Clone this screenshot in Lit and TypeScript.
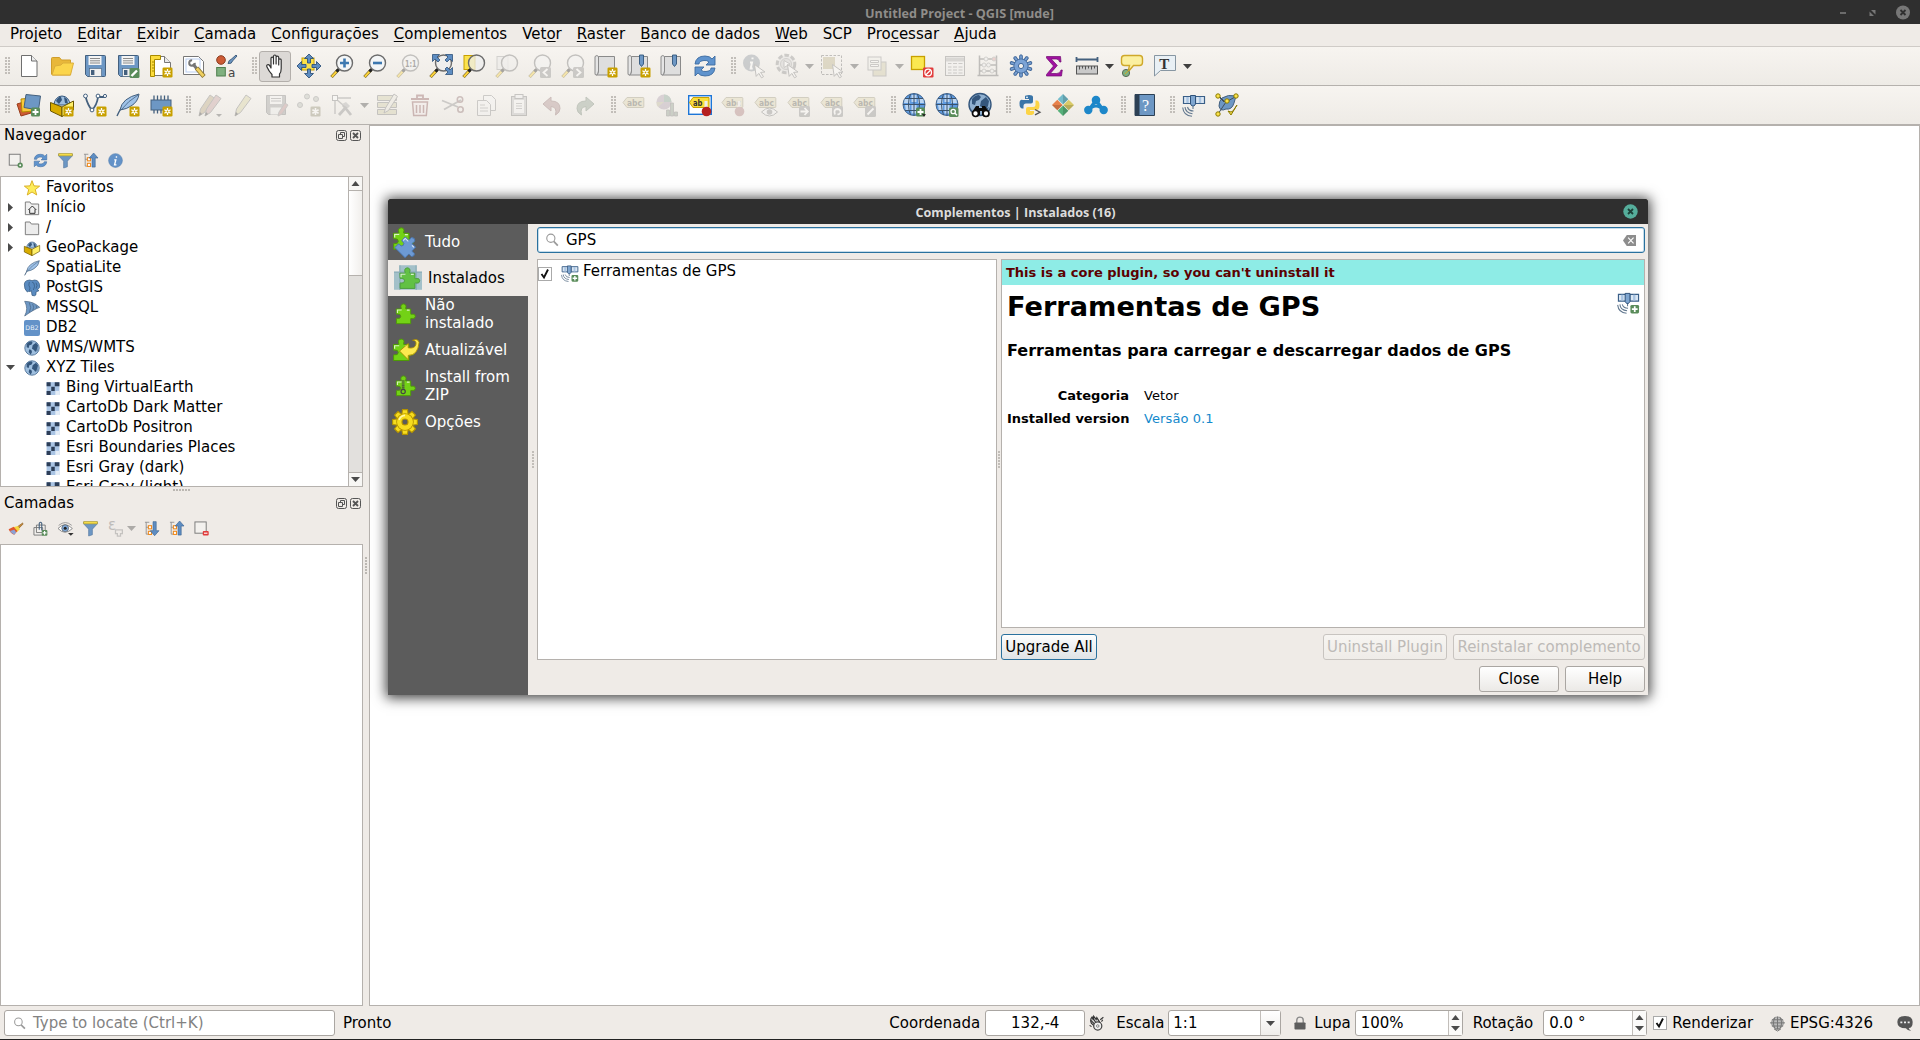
import { LitElement, html, svg, css, nothing } from "lit";
import { customElement, property } from "lit/decorators.js";
import { classMap } from "lit/directives/class-map.js";

/* ---------- shared icon parts (24 x 24 grid) ---------- */
const starBadge = svg`<rect x="13.5" y="13.5" width="10" height="10" rx="1.3" fill="#c8a000"/><path d="M18.5 15v7M15.4 16.8l6.2 3.5M15.4 20.3l6.2-3.5" stroke="#fff" stroke-width="1.3"/><circle cx="18.5" cy="18.5" r="1.9" fill="#fff"/><circle cx="18.5" cy="18.5" r=".9" fill="#c8a000"/>`;
const plusBadge = svg`<rect x="14" y="14.5" width="9" height="9" rx="1.5" fill="#5a8c5a"/><path d="M18.5 16v6M15.5 19h6" stroke="#fff" stroke-width="1.8"/>`;
const lens = (fill = "#f4f6f7") => svg`<path d="M1.5 23 8 16" stroke="#6a5a20" stroke-width="3.2"/><path d="M1.8 22.7 6.5 17.6" stroke="#fcd33a" stroke-width="2"/><path d="M6.5 17.5 9 15" stroke="#222" stroke-width="3"/><circle cx="14.5" cy="9" r="8" fill="${fill}" stroke="#6c6c6c" stroke-width="1.4"/>`;
const lensHigh = svg`<path d="M1.5 23 8 16" stroke="#6a5a20" stroke-width="3.2"/><path d="M1.8 22.7 6.5 17.6" stroke="#fcd33a" stroke-width="2"/><path d="M6.5 17.5 9 15" stroke="#222" stroke-width="3"/><circle cx="14.5" cy="9" r="8" fill="#eee" fill-opacity=".75" stroke="#6c6c6c" stroke-width="1.4"/>`;
const cursor = svg`<path d="M12.5 10.5 23 18l-4.4.4 2.9 4.3-2 1.1-2.7-4.4-2.6 3z" fill="#fff" stroke="#777" stroke-width="1"/>`;
const page = svg`<path d="M2.5 2.5h13l6 6v13h-19z" fill="#fff" stroke="#777"/><path d="M15.5 2.5v6h6" fill="#e8e8e8" stroke="#777"/>`;
const floppy = svg`<path d="M2.5 1.5h19q1 0 1 1v19q0 1-1 1h-17l-2-2z" fill="#6d97c4" stroke="#44607e"/><rect x="5.5" y="2" width="13" height="9" fill="#f4f4f4"/><path d="M7 4.5h10M7 6.8h10M7 9h10" stroke="#8a8a8a"/><rect x="6.5" y="14.5" width="12" height="8" fill="#f0f0f0" stroke="#44607e" stroke-width=".6"/><rect x="8" y="16" width="3.4" height="5" fill="#44607e"/>`;
const scroll = svg`<path d="M1 2.5q2-2 3.500 0V17q0 4-2 4T1 19z" fill="#e5e5e5" stroke="#8a8a8a"/><path d="M4.500 2.500h16V21H2.500q2-.5 2-4z" fill="#dedede" stroke="#8a8a8a"/>`;
const bookmark = svg`<path d="M12.500 1h4v9l-2 2.500-2-2.500z" fill="#6d97c4" stroke="#30557a" stroke-width=".9"/>`;
const label = svg`<path d="M1 9.500 5 4.500h16q.8 0 .8.800v8.400q0 .800-.8.800H5z" fill="#dcd3ac" stroke="#999274"/><text x="5" y="12.600" font-size="8.500" font-weight="700" font-family="DejaVu Sans" fill="#55554a" textLength="15" lengthAdjust="spacingAndGlyphs">abc</text>`;
const greyBadge = (d: string) => svg`<rect x="12" y="13" width="11" height="11" rx="1.500" fill="#8a8a8a"/><path d="${d}" fill="none" stroke="#fff" stroke-width="1.800"/>`;
const land = svg`<path d="M4 6q3-4 7-4l2 2-2 3-3 1-1 4-3-1zM13 8l5-4 3 4-1 5-3 5-2-3-3-2zM8 14l3 1 1 3-2 4-3-4zM19 15l2-1-2 4z" fill="#34567c"/>`;
const earth = svg`<circle cx="12" cy="12" r="10.800" fill="#9fbfdf" stroke="#54769b" stroke-width="1.400"/>${land}`;
const gridGlobe = svg`<circle cx="12" cy="11.500" r="11" fill="#5f9be0" stroke="#45678f"/><path d="M3 5h5v5H2zM9.500 2h5v7h-5zM16 5h5l1 5h-6zM3 12h5v6H4zM9.500 11.500h5v9h-5z" fill="#d9e8f8" opacity=".75"/><path d="M1 11.500h22M3 5.500h18M3 17.500h18M12 .5v22M8.500 1Q4.500 11 8.500 22M15.500 1q4 10 0 21" fill="none" stroke="#3a536e" stroke-width="1"/>`;
const puzzle = (fill: string, edge: string) => svg`<path d="M2.500 6.500h5q.8 0 .3-1.200Q6.600 1.500 10.300 1q3.800.5 2.500 4.300-.5 1.200.4 1.200h5v5.200q0 1 1.200.5 3.600-.9 3.900 2.300-.3 3.200-3.900 2.400-1.200-.6-1.200.400v5.200h-15.500v-5.200q0-1 1.200-.5 3.200.6 3.500-2.300-.3-2.900-3.500-2.400-1.200.5-1.200-.5z" fill="${fill}" stroke="${edge}"/><path d="M3.700 10.800V7.700h4.600M14 7.800h3" stroke="#fff" stroke-opacity=".75" stroke-width="1.200" fill="none"/>`;
const cog = (fill: string, edge: string, hole: string) => svg`<g fill="${fill}" stroke="${edge}" stroke-width="1">${[0, 45, 90, 135, 180, 225, 270, 315].map((a) => svg`<path transform="rotate(${a} 12 12)" d="M9 5.800 9.700.600h4.600l.7 5.200z"/>`)}<circle cx="12" cy="12" r="7.600"/></g><circle cx="12" cy="12" r="7.200" fill="${fill}"/><path d="M6.500 10Q8 6 12 5.800" fill="none" stroke="#fff7a8" stroke-width="1.600"/><circle cx="12" cy="12" r="2.800" fill="${hole}" stroke="${edge}"/>`;
const feather = svg`<path d="M1 23Q5 14 9 11" fill="none" stroke="#44607e" stroke-width="1.400"/><path d="M4 17Q6 5 23 1q-1 8-8 12-4 3-11 4z" fill="#9fc2e8" stroke="#44607e"/><path d="M5 17Q12 8 22 2" fill="none" stroke="#44607e" stroke-width=".8"/>`;
const box = svg`<path d="M4 12a8 9 0 0 1 16 0z" fill="#9fbfdf" stroke="#34567c"/><path d="M6 8q3-5 5-4l1 3-3 4zM14 4l3 2 1 5-3-1z" fill="#34567c"/><path d="M.500 9.500 12 14v9.500L.500 18z" fill="#d8ac00" stroke="#6b5600"/><path d="M23.500 8 12 14v9.500L23.500 17z" fill="#fff06a" stroke="#6b5600"/>`;
const satellite = svg`<g fill="#dbe7f3" stroke="#3a5f88" stroke-width="1.200"><path d="M1.500 3.500h8v7h-8zM13.500 3.500h9v7h-9z"/></g><path d="M5.500 4v6M18 4v6" stroke="#a9c4e2" stroke-width="2.400"/><path d="M8.500 2.500h5v8.500l-1.500 2h-2L8.500 11z" fill="#7fa6d0" stroke="#2f527a"/><path d="M11 13.500v2.500M11.500 18q-5 0-6-4M10.500 20.700Q3.500 20 3 14M10 23.300Q1.500 22.700.7 14.500" fill="none" stroke="#62788f" stroke-width="1.100"/>`;
const pencil = (fill: string) => svg`<path d="M4 23l1.500-7L15 2l5 3.500L9.500 19.500z" fill="${fill}" stroke="#777"/><path d="m4 23 1-4 2 2z" fill="#333"/>`;
const sync = svg`<path d="M2 10Q3 2 12 2q5 0 7 3l3-3v9h-9l3-3q-2-2-5-1.500Q6 7 6 10zM22 14q-1 8-10 8-5 0-7-3l-3 3v-9h9l-3 3q2 2 5 1.500 5-.5 5-3.500z" fill="#5f93cd" stroke="#3c6ba0" stroke-width=".9"/>`;
const treeLines = svg`<path d="M1.500 2h7M3.500 2v19h4M3.500 10h4" fill="none" stroke="#888" stroke-width="1.300"/><rect x="7" y="7.500" width="5" height="5" fill="#fff" stroke="#ef8a1d" stroke-width="1.700"/><rect x="7" y="16.500" width="5" height="5" fill="#fff" stroke="#ef8a1d" stroke-width="1.700"/>`;

const ICONS: Record<string, unknown> = {
  new: svg`<path d="M4.500 1.500h10l5.500 5.500v15.500H4.500z" fill="#fff" stroke="#6f6f6f"/><path d="M14.500 1.500V7H20" fill="#eee" stroke="#6f6f6f"/>`,
  open: svg`<path d="M1.500 20V4.500q0-1 1-1h7l2 2.500h9v15H2.500z" fill="#e8b73a" stroke="#cf9d2b"/><path d="m2 21 3-9 6-1 2-2h10.500l-3 12z" fill="#fbd54c" stroke="#dcae3a"/>`,
  save: floppy,
  saveas: svg`${floppy}<rect x="13.500" y="14" width="10" height="10" rx="1.500" fill="#5a8c5a"/><path d="m15.500 22 5.500-5.500" stroke="#fff" stroke-width="2.400"/>`,
  layout: svg`${page}<path d="M1.500 1.500h10v4h-6v17h-4z" fill="#fcdc3c" stroke="#a88a00"/><path d="M3 8h2M3 11h2M3 14h2M3 17h2" stroke="#a88a00"/>${starBadge}`,
  manager: svg`<path d="M1.500 2.500h15l5 5v13h-20z" fill="#fff" stroke="#777"/><rect x="4" y="5" width="14" height="13" fill="none" stroke="#b9cdf0"/><path d="m11 10 4 5" stroke="#777" stroke-width="3"/><path d="m14.500 14 7.500 8.500" stroke="#8a7430" stroke-width="4.400"/><path d="m14.800 14.300 6.700 7.700" stroke="#f0d060" stroke-width="2.800"/><circle cx="10" cy="9" r="2.800" fill="none" stroke="#777" stroke-width="2" stroke-dasharray="13 4"/>`,
  style: svg`<circle cx="6" cy="6" r="4.300" fill="#cd5b35" stroke="#8a3d20"/><rect x="1.700" y="13.500" width="8.600" height="8.500" fill="#7fb07f" stroke="#4f7f4f"/><path d="M13 9.500q1-4 3-4L21 1l1 1-4.500 5q-.5 3-4.500 2.500z" fill="#6d97c4" stroke="#44607e"/><text x="13" y="22.500" font-size="12" font-family="DejaVu Sans" fill="#444">a</text>`,
  hand: svg`<path d="M8 14V4.500q0-1.400 1.200-1.400T10.500 4.500V10 2.300Q10.600 1 11.800 1q1.300 0 1.300 1.300V10 3.300q.1-1.200 1.300-1.200t1.300 1.200V11 6q.1-1.200 1.200-1.200Q18.200 4.800 18.200 6v8.500q0 4-1.700 5.500v3H9v-2.500q-3-3-5-7.500-.8-1.600.5-2.200t2 .6z" fill="#fff" stroke="#333" stroke-width="1.200" stroke-linejoin="round"/>`,
  pan: svg`<rect x="5" y="4" width="12" height="12" fill="#fbe24c" stroke="#c8a000"/><g fill="#5e8dc2" stroke="#2f527a" stroke-width=".9"><path d="m12 0 4.500 4.500h-3V9h-3V4.500h-3zM12 24l4.500-4.500h-3V15h-3v4.500h-3zM0 12l4.500-4.500v3H9v3H4.500v3zM24 12l-4.500-4.500v3H15v3h4.500v3z"/></g>`,
  zin: svg`${lens()}<path d="M14.500 4.500v9M10 9h9" stroke="#3d78b0" stroke-width="2.600"/>`,
  zout: svg`${lens()}<path d="M10 9h9" stroke="#3d78b0" stroke-width="2.600"/>`,
  zone: svg`${lens()}<text x="9" y="12.500" font-size="9" font-weight="700" font-family="DejaVu Sans" fill="#333" textLength="11.500" lengthAdjust="spacingAndGlyphs">1:1</text>`,
  zfull: svg`${lensHigh}<g fill="#5e8dc2" stroke="#2f527a" stroke-width=".8"><path d="M3.500.500h7L8 3l3 3-2 2-3-3-2.500 2.500zM23.500.500h-7L19 3l-3 3 2 2 3-3 2.500 2.500zM23.500 20.500h-7L19 18l-3-3 2-2 3 3 2.500-2.500z"/></g>`,
  zsel: svg`<rect x="2" y="1.500" width="11" height="14" fill="#fbe24c" stroke="#c8a000"/>${lensHigh}`,
  zlayer: svg`<rect x="2" y="2.500" width="11" height="13" fill="#e8e8e8" stroke="#999"/>${lensHigh}`,
  zlast: svg`${lens()}${greyBadge("m19.500 15-4 3.500 4 3.500")}`,
  znext: svg`${lens()}${greyBadge("m15.500 15 4 3.500-4 3.500")}`,
  bmview: svg`${scroll}${starBadge}`,
  bmnew: svg`${scroll}${bookmark}${starBadge}`,
  bmshow: svg`${scroll}${bookmark}`,
  refresh: sync,
  identify: svg`<circle cx="9.500" cy="9" r="8.500" fill="#858e98"/><path d="M10.500 3.500v1.800M8 8.500h2l-1.300 6h2" stroke="#fff" stroke-width="2" fill="none"/>${cursor}`,
  action: svg`<circle cx="11" cy="10" r="8.800" fill="#ddd" stroke="#888" stroke-width="3" stroke-dasharray="4.600 2"/><circle cx="11" cy="10" r="5.500" fill="#ccc" stroke="#999"/><path d="M9 6.500v7l6-3.500z" fill="#fff" stroke="#888"/>${cursor}`,
  select: svg`<rect x="1.500" y="1.500" width="20" height="19" fill="none" stroke="#666" stroke-dasharray="2.500 1.500"/><rect x="3" y="3" width="12" height="12" fill="#b8ad82"/>${cursor}`,
  form: svg`<rect x="8" y="8" width="13" height="14" fill="#cfc9a4" stroke="#888"/><rect x="3" y="3" width="13" height="13" fill="#f0f0ea" stroke="#888"/><path d="M5.500 6.500h8v2h-8zM5.500 10.500h8v2h-8z" fill="#fff" stroke="#888"/>`,
  deselect: svg`<rect x="1.500" y="2.500" width="13" height="13" fill="#fbe850" stroke="#c8a000" stroke-width="1.300"/><rect x="13" y="13.500" width="10.500" height="10" rx="1.300" fill="#e13b3b"/><circle cx="18.200" cy="18.500" r="3.300" fill="none" stroke="#fff" stroke-width="1.300"/><path d="m16 20.700 4.500-4.400" stroke="#fff" stroke-width="1.300"/>`,
  table: svg`<rect x="2.500" y="2.500" width="19" height="19" fill="#f2f2f2" stroke="#777"/><path d="M3 5.500h18" stroke="#aaa" stroke-width="4"/><path d="M5 9.500h3.500M10 9.500h4M15.500 9.500h4M5 13h3.500M10 13h4M15.500 13h4M5 16h3.500M10 16h4M15.500 16h4M5 19h3.500M10 19h4M15.500 19h4" stroke="#888"/>`,
  abacus: svg`<path d="M3.500 1.500v20M20.500 1.500v20M3 5h18M3 11h18M3 17h18M1.500 21.500h21" stroke="#666" stroke-width="1.500"/><g fill="#eee" stroke="#999"><circle cx="10" cy="5" r="2"/><circle cx="18" cy="5" r="2" fill="#d99"/><circle cx="8" cy="11" r="2"/><circle cx="12.500" cy="11" r="2"/><circle cx="8" cy="17" r="2"/><circle cx="16" cy="17" r="2"/></g>`,
  toolbox: svg`<g stroke="#41689a" stroke-width="1" fill="#7ba3d6">${[0, 36, 72, 108, 144, 180, 216, 252, 288, 324].map((a) => svg`<path transform="rotate(${a} 12 12)" d="M10.700 6V1.500q1.300-1.500 2.600 0V6z"/>`)}<circle cx="12" cy="12" r="7"/></g><circle cx="12" cy="12" r="6.500" fill="#7ba3d6"/><circle cx="12" cy="12" r="2.600" fill="#f4f1ec" stroke="#41689a"/>`,
  sigma: svg`<path d="M4.500 2.500h14l.5 5.500h-1.300q-.7-3-3.500-3H9.300l6 6.500-7 8h6.500q3.500 0 4.200-3.500h1.300L19.500 22h-15v-1.500l7-8.500-7-8z" fill="#a012a0" stroke="#700a70" stroke-width=".7"/>`,
  ruler: svg`<path d="M1.500 3v5M22.500 3v5M1.500 5.500h21" stroke="#44607e" stroke-width="1.800"/><rect x="1.500" y="12" width="21" height="8" fill="#c9c9c9" stroke="#555"/><path d="M4.500 12v3.500M7.500 12v2.500M10.500 12v3.500M13.500 12v2.500M16.500 12v3.500M19.500 12v2.500" stroke="#555"/>`,
  tips: svg`<path d="M4.500 1.500h15q3 0 3 3v4q0 3-3 3h-6L8 18l1.500-6.500h-5q-3 0-3-3v-4q0-3 3-3z" fill="#fbf0a0" stroke="#cfa82a" stroke-width="1.400"/><circle cx="6" cy="19" r="3.600" fill="#7fb07f" stroke="#5a6a5a"/><path d="m5 20 5-5" stroke="#cfa82a"/>`,
  annotation: svg`<path d="M1.500 1.500h21v15h-15L1.500 22z" fill="#e9f0f5" stroke="#8796a2"/><text x="6.200" y="14.800" font-size="15" font-weight="700" font-family="Liberation Serif" fill="#333">T</text>`,
  datasource: svg`<path d="m0 11 10-3 4 12-10 3z" fill="#cd5b35" stroke="#9a3d1a"/><path d="m4 6 12-1 1 13-12 1z" fill="#fbc93a" stroke="#b38a00"/><path d="M9 1.500 23.500 3l-2 14L7 14.500z" fill="#6d97c4" stroke="#44607e"/>${plusBadge}`,
  geopackage: svg`${box}${starBadge}`,
  shape: svg`<path d="M2.500 3.500Q5 13 9 17q5-5 6-13h7" fill="none" stroke="#44607e" stroke-width="1.800"/><g fill="#fff" stroke="#44607e"><circle cx="2.500" cy="3" r="1.900"/><circle cx="9" cy="17" r="1.900"/><circle cx="15" cy="3" r="1.900"/><circle cx="22" cy="3" r="1.600"/></g>${starBadge}`,
  spatialite: svg`${feather}${starBadge}`,
  memory: svg`<path d="M5 2.500v18M8.500 2.500v18M12 2.500v18M15.500 2.500v18M19 2.500v18" stroke="#44607e" stroke-width="1.300"/><rect x="2" y="7" width="20" height="10" fill="#6d97c4" stroke="#44607e"/>${starBadge}`,
  edits: svg`<g transform="translate(-3 0)">${pencil("#b7a37b")}</g><g transform="translate(3 0)">${pencil("#c29a9a")}</g><path d="M18 21h6l-3 3z" fill="#555"/>`,
  edit: pencil("#d5cf9c"),
  saveedits: svg`<path d="M2.500 2.500h19v19h-17l-2-2z" fill="#999" stroke="#777"/><rect x="6" y="3" width="12" height="8" fill="#f4f4f4"/><path d="M7 5.500h10M7 8h10" stroke="#888"/><rect x="6.500" y="14.500" width="11" height="7" fill="#eee"/><path d="m14 23 1-4 6-9 3 2-6 9z" fill="#b98a8a" stroke="#888"/>`,
  addfeature: svg`<g fill="#b8bdb4" stroke="#888"><circle cx="10" cy="3.500" r="2.500"/><circle cx="3" cy="12" r="2.500"/><circle cx="19" cy="6" r="2.500"/></g><rect x="13.500" y="13.500" width="10" height="10" rx="1.300" fill="#8e8a70"/><path d="M18.500 15v7M15.400 16.800l6.200 3.500M15.400 20.300l6.200-3.500" stroke="#fff" stroke-width="1.600"/>`,
  vertex: svg`<path d="M5 21V5h16M6 6l7 6" fill="none" stroke="#888" stroke-width="1.400"/><rect x="2.500" y="2.500" width="5" height="5" fill="#fff" stroke="#777"/><path d="m9 22 9-10M13 12l8 10" stroke="#888" stroke-width="2.800"/><path d="m12 11 4-2 4 4-2 2z" fill="#aaa"/>`,
  modify: svg`<path d="M2.500 2.500h19v5h-19zM2.500 9.500h19v5h-19zM2.500 16.500h19v5h-19z" fill="#cfcba5" stroke="#777"/><path d="m9 20 1.500-5L19 1l3.500 2.500-9 14z" fill="#e8e5da" stroke="#777"/>`,
  trash: svg`<path d="M3 6h18M9 5V2.500h6V5" fill="none" stroke="#8a5555" stroke-width="1.800"/><path d="M4.500 9h15l-1.200 13.500H5.700z" fill="#f3eaea" stroke="#8a5555" stroke-width="1.500"/><path d="M8.500 12v8M12 12v8M15.500 12v8" stroke="#8a5555" stroke-width="1.500"/>`,
  cut: svg`<path d="M1 7.500 17 14M3 16.500 20 7" stroke="#888" stroke-width="1.800"/><circle cx="19" cy="6.500" r="2.700" fill="none" stroke="#8a6a6a" stroke-width="1.600"/><circle cx="19.500" cy="16.500" r="2.700" fill="none" stroke="#8a6a6a" stroke-width="1.600"/>`,
  copy: svg`<path d="M9.500 2.500h8l4 4v11h-12z" fill="#f5f5f5" stroke="#888"/><path d="M3.500 7.500h9l4 4v11h-13z" fill="#f5f5f5" stroke="#888"/><path d="M6 12h5M6 15h8M6 18h8" stroke="#999"/>`,
  paste: svg`<rect x="4.500" y="3.500" width="15" height="19" fill="#bbb" stroke="#777"/><rect x="7" y="7" width="10" height="13" fill="#f6f6f6"/><rect x="8" y="1.500" width="8" height="4" fill="#eee" stroke="#777"/><path d="M9 10.500h6M9 13h6M9 15.500h6" stroke="#999"/>`,
  undo: svg`<path d="m3 11 8-7v4q9 0 9 7.500 0 4-4.500 6.500 2-8-4.500-8.500V18z" fill="#a88" stroke="#866"/>`,
  redo: svg`<path d="m21 11-8-7v4q-9 0-9 7.500 0 4 4.500 6.500-2-8 4.500-8.500V18z" fill="#8a9a8a" stroke="#6c7c6c"/>`,
  label,
  diagram: svg`<circle cx="9" cy="9" r="7.500" fill="#a9a"/><path d="M9 9V1.500A7.500 7.500 0 0 1 16.500 9z" fill="#7c9c8c"/><path d="M9 9 3 14A7.500 7.500 0 0 1 1.500 9z" fill="#b9b394"/><path d="M11.500 17h3v6h-3zM15.500 10h3v13h-3zM19.500 19h3v4h-3z" fill="#8a9a8a" stroke="#666" stroke-width=".7"/>`,
  pinned: svg`<rect x=".700" y="2.700" width="22.600" height="18.600" fill="#fff" stroke="#1d76d8" stroke-width="1.400"/><path d="M1.500 9.500 5 4.500h16v10H5z" fill="#fbdf3a" stroke="#c8a000"/><text x="5" y="12.800" font-size="8.500" font-weight="700" font-family="DejaVu Sans" fill="#333" textLength="9.500" lengthAdjust="spacingAndGlyphs">ab</text><path d="M18 8v8" stroke="#eee" stroke-width="3"/><circle cx="18.500" cy="18.500" r="4.800" fill="#b52020"/>`,
  labelpin: svg`${label}<path d="M18 8v8" stroke="#eee" stroke-width="3"/><circle cx="18.500" cy="18.500" r="4.800" fill="#a77"/>`,
  labeleye: svg`${label}<path d="M7.500 19q8-8 16 0-8 8-16 0z" fill="#f5f5f5" stroke="#777"/><circle cx="15.500" cy="19" r="2.800" fill="#888"/>`,
  labelmove: svg`${label}${greyBadge("M13.500 18.500h7M17.500 15l3.300 3.500-3.300 3.500")}`,
  labelrot: svg`${label}${greyBadge("M15 21.500q-1.800-5.500 2.500-5.500 3.500.5 3 3.500-.8 2.200-3 1.700")}`,
  labeledit: svg`${label}${greyBadge("m14.500 21.500 6-6")}`,
  webadd: svg`${gridGlobe}${plusBadge}<path d="m20 21 4 .2-2 2.600z" fill="#222"/>`,
  websearch: svg`${gridGlobe}<rect x="14" y="14.500" width="9.500" height="9.500" rx="1.500" fill="#5a8c5a"/><circle cx="18.200" cy="18.500" r="2.200" fill="none" stroke="#fff" stroke-width="1.300"/><path d="m20 20.300 2 2" stroke="#fff" stroke-width="1.500"/>`,
  metasearch: svg`<circle cx="12" cy="11.500" r="11" fill="#8fb0d0" stroke="#34567c" stroke-width="1.400"/>${land}<path d="M8 13h3v2h3v-2h3l4 6v3h-7v-4h-2v4H4v-3z" fill="#0a0a0a"/><circle cx="7.500" cy="20.500" r="3" fill="#fff" stroke="#0a0a0a" stroke-width="1.700"/><circle cx="18" cy="20.500" r="3" fill="#fff" stroke="#0a0a0a" stroke-width="1.700"/>`,
  python: svg`<path d="M7 6V3.500Q7 2 11 2t4 2v4.500q0 2-2 2H8q-2.500 0-2.500 2.500v2.500H4Q1.500 15 1.500 10.500T5 7h6V6z" fill="#3a75a8"/><path d="M17.500 7.500H19q2.500.5 2.500 5T18 17h-6v1h4v2q0 2-4 2t-4-2v-4q0-2 2-2h5q2.500 0 2.500-2.500z" fill="#fcd446"/><circle cx="9" cy="4.300" r=".9" fill="#fff"/><path d="m17 16.500 5 2.700-5 2.700" fill="none" stroke="#555" stroke-width="1.300"/>`,
  mmqgis: svg`<path d="m12 1 5.300 5.300-5.300 5.300-5.300-5.300z" fill="#75bccb"/><path d="m17.700 6.700 5.300 5.300-5.300 5.300-5.300-5.300z" fill="#d9ca68"/><path d="m6.300 6.700 5.300 5.300-5.300 5.300L1 12z" fill="#e8814a"/><path d="m12 12.400 5.300 5.300L12 23l-5.300-5.300z" fill="#56b07a"/><path d="M12 1v10.600l5.300-5.300zM1 12h10.600l-5.300 5.300zM12.400 12H23l-5.300 5.300zM12 12.400V23l5.300-5.300z" opacity=".15"/>`,
  nodes: svg`<path d="M4 18 12 7l8 11M4 18q4-5 8-5t8 5" fill="none" stroke="#1d87c9" stroke-width="3"/><circle cx="12" cy="7" r="4.300" fill="#1d87c9"/><circle cx="4.300" cy="17" r="4.200" fill="#1d87c9"/><circle cx="19.700" cy="17" r="4.200" fill="#1d87c9"/>`,
  help: svg`<path d="M2 1.500h19.500v21H2z" fill="#6d97c4" stroke="#2c4054"/><path d="M2 1.500h4.500v21H2z" fill="#2c4054"/><text x="9" y="17.500" font-size="16" font-family="Liberation Serif" fill="#fff">?</text>`,
  gps: satellite,
  gpsplus: svg`${satellite}${plusBadge}`,
  topology: svg`<path d="M7 5q6-4 14-2l-2 7q-2 7-8 6-6 3-7-3 0-5 3-8z" fill="#6d97c4" stroke="#44607e"/><path d="m3 3 6 6M3 21l8-12 9-5M10 9l-6-6" stroke="#3f4f5f" fill="none"/><g fill="#fbe24c" stroke="#8a7a00"><circle cx="3" cy="3" r="2.200"/><circle cx="3" cy="21" r="2.200"/><circle cx="21" cy="3" r="2.200"/><circle cx="12" cy="8" r="2.200"/></g><path d="m13 18 3 4 6-10-4 6-2 1z" fill="#fbe24c" stroke="#8a7a00"/>`,
  /* dock toolbars */
  addlayer: svg`<rect x="2" y="2" width="17.500" height="17.500" fill="#f3f1ee" stroke="#777" stroke-width="1.500"/><circle cx="19.500" cy="19.500" r="4.200" fill="#5a8c5a"/><circle cx="19.500" cy="19.500" r="1.600" fill="#fff"/>`,
  filter: svg`<path d="M1 1.500h22v3L15 13v9l-6 2V13L1 4.500z" fill="#6d97c4" stroke="#53779f"/><path d="M1 1h22v3.500H1z" fill="#fbe24c" stroke="#b39a20"/>`,
  collapse: svg`${treeLines}<path d="m17 0 7 8h-4.500v14.500h-5V8H10z" fill="#5e8dc2" stroke="#3a6290"/>`,
  expand: svg`${treeLines}<path d="m17 23.500 7-8h-4.500V1h-5v14.500H10z" fill="#5e8dc2" stroke="#3a6290"/>`,
  info: svg`<circle cx="12" cy="12" r="11" fill="#6392c8" stroke="#5580b0"/><path d="M13.500 5v2.500M10 11h2.500l-2 8h3" stroke="#fff" stroke-width="2.200" fill="none"/>`,
  brush: svg`<path d="M23.500 3 14 10l2 3 8-8z" fill="#c78a3b" stroke="#8a5d20"/><path d="M8 10l8-2 3 5-5 5z" fill="#f5d73d"/><path d="m1 13 8-4 6 7-5 6Q4 20 1 13z" fill="#e0562f"/><path d="m3 16 7-2 3 4-3 4Q6 20 3 16z" fill="#8aa3d8"/>`,
  group: svg`<path d="M1.500 10.500h14v12h-14zM5.500 6.500h14v12h-14z" fill="#f3f1ee" stroke="#777" stroke-width="1.500"/><path d="M10 14V3.500q2-3 4 0V15" fill="none" stroke="#44607e" stroke-width="1.700"/>${plusBadge}`,
  eye: svg`<path d="M0 12q11-12 23 0-12 12-23 0z" fill="#fff" stroke="#777" stroke-width="1.300"/><path d="M1 7Q12-2 22 7" fill="none" stroke="#999" stroke-width="1.500"/><circle cx="11.500" cy="11.500" r="5.500" fill="#7ea8d8" stroke="#555"/><circle cx="11.500" cy="11.500" r="2.400" fill="#222"/><path d="M16 19h9l-4.500 4.500z" fill="#333"/>`,
  epsilon: svg`<text x="0" y="15" font-size="24" font-family="DejaVu Sans" fill="#777">ε</text><path d="M12 14h11v6h-3v4h-5v-4h-3z" fill="none" stroke="#888" stroke-width="2"/>`,
  remove: svg`<rect x="1.500" y="1.500" width="18" height="18" fill="#f3f1ee" stroke="#777" stroke-width="1.500"/><rect x="14" y="16" width="9.500" height="7" rx="1.500" fill="#e13b3b"/><path d="M16 19.500h5.500" stroke="#fff" stroke-width="1.800"/>`,
  /* browser tree */
  star: svg`<path d="m12 1 3 7.800 8.500.4-6.600 5.200 2.200 8.100L12 18l-7.100 4.500 2.200-8.100L.500 9.200 9 8.800z" fill="#fdec5a" stroke="#d8ac20" stroke-width="1.400"/>`,
  home: svg`<path d="M2 22V3h7l2 3h11v16z" fill="#f0f0f0" stroke="#777" stroke-width="1.400"/><path d="m6.500 15 6-6 6 6M8.500 14v6h8v-6" fill="none" stroke="#333" stroke-width="1.500"/>`,
  folder: svg`<path d="M2 22V3h7l2 3h11v16z" fill="#ececec" stroke="#777" stroke-width="1.400"/>`,
  gpkg: box,
  feather,
  elephant: svg`<path d="M4 1q5-2 8 0 4-2 8 0 4 3 3.500 10l-3.500 4 2.500 1-4.500 2v4q-2 3-6 1l-1-7q-2 2-4 1l-2 1Q0 14 .5 6 1 2 4 1z" fill="#5a8bc0" stroke="#30557a"/><path d="M8 3q-2 5 1 9l-1 4M12 3l3 2q2 5-1 10M18 4q3 4 0 9" fill="none" stroke="#30557a"/>`,
  mssql: svg`<path d="M1 2q13 0 22.500 9-8.500 3-22.500 13 6-11 0-22z" fill="#6d97c4" stroke="#44607e"/><path d="M8 4q4 7 0 15M13 6q3 5 0 10M18 8q2 3 0 5" fill="none" stroke="#44607e"/>`,
  db2: svg`<rect width="24" height="24" rx="3" fill="#6392c8"/><text x="2" y="15.500" font-size="9.500" font-family="DejaVu Sans" fill="#e9f0f8" textLength="20" lengthAdjust="spacingAndGlyphs">DB2</text>`,
  earth,
  tiles: svg`<rect x="1" y="2" width="22" height="22" fill="#a9c4e4"/><path d="M1 2h7v7H1zM15 2h8v7h-8zM9 10h6v7H9zM1 17h7v7H1z" fill="#2c3e58"/><path d="M16 17h7v7h-7z" fill="#e4edf7"/>`,
  /* plugin dialog */
  all: svg`<g transform="translate(0 -1) scale(.85)">${puzzle("#73d216", "#4e9a06")}</g><g transform="translate(14.500 2.500) rotate(45) scale(.8)">${puzzle("#6d9ad4", "#4a74ad")}</g>`,
  installed: svg`<path d="M5 1h14v6h5v15H0V7h5z" fill="#a3c0c9"/><path d="M5 1v21M19 1v21M0 7h24" stroke="#84a9b5" fill="none"/><g transform="translate(3 2.500) scale(.82)">${puzzle("#62c144", "#4c9c3c")}</g>`,
  plugin: puzzle("#73d216", "#4e9a06"),
  upgrade: svg`<g transform="translate(-1 1) scale(.92)">${puzzle("#73d216", "#4e9a06")}</g><path d="m7 13 8-7v4q6 1 7-3 1-3.500-3-4 5-2 6 2-1 12-10 12v4z" fill="#fce94f" stroke="#a88a00" stroke-width=".8"/>`,
  zip: svg`${puzzle("#73d216", "#4e9a06")}<path d="M10 6v10" stroke="#444" stroke-width="3" stroke-dasharray="1.200 1"/><circle cx="10" cy="18" r="2.300" fill="none" stroke="#444" stroke-width="1.300"/>`,
  options: cog("#f7dc1e", "#b39200", "#5c5c5c"),
  /* status bar and fields */
  search: svg`<circle cx="10" cy="9" r="7" fill="none" stroke="#9a9a9a" stroke-width="1.900"/><path d="m15 14.500 7 7" stroke="#9a9a9a" stroke-width="3"/>`,
  clear: svg`<path d="M0 12 7 2h17v20H7z" fill="#8d8d8d"/><path d="m9.500 6.500 10 11M19.500 6.500l-10 11" stroke="#fff" stroke-width="2"/>`,
  extents: svg`<path d="M4 12Q1 5 5 1.500l2 5 .5-6 4 5 1-3 5 8-6 8z" fill="#ddd" stroke="#333" stroke-width="1.900"/><path d="M6 3l6 9M3 7l8 8M1 15l3 2M18 6l5-4M20 9l2-3" fill="none" stroke="#333" stroke-width="1.800"/><circle cx="14" cy="16" r="6.500" fill="#eee" stroke="#444" stroke-width="2"/><circle cx="14" cy="16" r="2" fill="#fff" stroke="#444"/>`,
  lock: svg`<path d="M6.500 12V7q0-5 5.500-5t5.500 5v5" fill="none" stroke="#8a8a8a" stroke-width="2.400"/><rect x="2.500" y="11" width="19" height="12" rx="1.500" fill="#5e5e5e"/>`,
  crs: svg`<circle cx="12" cy="11" r="9.500" fill="#bbb" stroke="#777"/><path d="M0 11h24M3 6h18M3 16h18M12 1v20M8 2q-5 9 0 18M16 2q5 9 0 18M7 21h10l-5 3z" fill="none" stroke="#777" stroke-width="1.600"/>`,
  bubble: svg`<path d="M12 1.500q11.500 0 11.500 9t-6 9q1 3 4 4-6 0-8-3.500Q.5 20 .500 10.500q0-9 11.500-9z" fill="#555"/><path d="M5 11h3M10.500 11h3M16 11h3" stroke="#eee" stroke-width="2.800"/>`,
};

const icon = (name: string, size = 24) => html`<svg class="ic" viewBox="0 0 24 24" width=${size} height=${size} aria-hidden="true">${ICONS[name]}</svg>`;
const arrow = (dir: "up" | "down" | "right", color = "#4a4a4a") => html`<svg class="ic" width="9" height="9" viewBox="0 0 9 9"><path d=${dir === "down" ? "M0 2h9L4.500 7z" : dir === "up" ? "M0.500 7h8L4.500 2z" : "M2 0v9l5-4.500z"} fill=${color}></path></svg>`;

const base = css`
  :host, * { box-sizing: border-box; }
  .ic { display: block; flex: none; overflow: visible; }
`;

/* Entries: "name", "name!" disabled, "|" grip, "v" menu arrow, "v!" disabled menu arrow. */
const BAR1 = "new open save saveas layout manager style | hand pan zin zout zone! zfull zsel zlayer! zlast! znext! bmview bmnew bmshow refresh | identify! action! v! select! v! form! v! deselect table! abacus! toolbox sigma ruler v tips annotation v".split(" ");
const BAR2 = "datasource geopackage shape spatialite memory | edits! edit! saveedits! addfeature! vertex! v! modify! trash! cut! copy! paste! undo! redo! | label! diagram! pinned labelpin! labeleye! labelmove! labelrot! labeledit! | webadd websearch metasearch | python mmqgis nodes | help | gps topology".split(" ");

@customElement("qg-toolbar")
class QgToolbar extends LitElement {
  @property({ attribute: false }) items: string[] = [];
  static styles = [base, css`
    :host { display: flex; height: 39px; align-items: center; background: linear-gradient(#f7f4f0, #eeebe6); border-bottom: 1px solid #b5b1ad; }
    .grip { width: 16.200px; height: 18px; display: flex; justify-content: flex-end; padding-right: 2px; }
    .grip.first { width: 12.300px; }
    .grip i { width: 5px; height: 17px; background-image: radial-gradient(circle at 1px 1px, #c2beb9 0.8px, transparent 1px); background-size: 3px 3px; }
    .tool { width: 33px; height: 31px; display: flex; align-items: center; justify-content: center; }
    .off { opacity: .36; }
    .hand { background: #dcd9d6; border: 1px solid #b3afab; border-radius: 3px; width: 32px; margin-right: 1px; }
    .menu { width: 12px; display: flex; justify-content: center; }
  `];
  render() {
    return html`<span class="grip first"><i></i></span>${this.items.map((raw) => {
      const off = raw.endsWith("!");
      const name = off ? raw.slice(0, -1) : raw;
      if (name === "|") return html`<span class="grip"><i></i></span>`;
      if (name === "v") return html`<span class=${classMap({ menu: true, off })}>${arrow("down", "#3f3f3f")}</span>`;
      return html`<span class=${classMap({ tool: true, off, hand: name === "hand" })}>${icon(name)}</span>`;
    })}`;
  }
}

const MENU: [string, number][] = [["Projeto", 3], ["Editar", 0], ["Exibir", 0], ["Camada", 0], ["Configurações", 0], ["Complementos", 0], ["Vetor", 3], ["Raster", 0], ["Banco de dados", 0], ["Web", 0], ["SCP", -1], ["Processar", 3], ["Ajuda", 0]];

const TREE: { t: string; i: string; a?: "right" | "down"; child?: boolean }[] = [
  { t: "Favoritos", i: "star" }, { t: "Início", i: "home", a: "right" }, { t: "/", i: "folder", a: "right" },
  { t: "GeoPackage", i: "gpkg", a: "right" }, { t: "SpatiaLite", i: "feather" }, { t: "PostGIS", i: "elephant" },
  { t: "MSSQL", i: "mssql" }, { t: "DB2", i: "db2" }, { t: "WMS/WMTS", i: "earth" }, { t: "XYZ Tiles", i: "earth", a: "down" },
  ...["Bing VirtualEarth", "CartoDb Dark Matter", "CartoDb Positron", "Esri Boundaries Places", "Esri Gray (dark)", "Esri Gray (light)"].map((t) => ({ t, i: "tiles", child: true })),
];

@customElement("qg-dock-title")
class QgDockTitle extends LitElement {
  @property() label = "";
  static styles = [base, css`
    :host { display: flex; align-items: center; height: 20px; padding: 0 2px 0 4px; gap: 3px; }
    span { flex: 1; line-height: 18px; }
  `];
  render() {
    return html`<span>${this.label}</span>
      <svg class="ic" width="11" height="11" viewBox="0 0 11 11" fill="none" stroke="#555"><rect x=".5" y=".5" width="10" height="10" rx="2"></rect><path d="M4.500 4V2.500h4v4H7M2.500 4.500h4v4h-4z"></path></svg>
      <svg class="ic" width="11" height="11" viewBox="0 0 11 11" fill="none" stroke="#555"><rect x=".5" y=".5" width="10" height="10" rx="2"></rect><path d="m3 3 5 5M8 3 3 8" stroke-width="1.800"></path></svg>`;
  }
}

const PAGES: [string, string, number][] = [["Tudo", "all", 28], ["Instalados", "installed", 28], ["Não instalado", "plugin", 22], ["Atualizável", "upgrade", 26], ["Install from ZIP", "zip", 22], ["Opções", "options", 26]];

@customElement("qg-plugin-dialog")
class QgPluginDialog extends LitElement {
  static styles = [base, css`
    :host { display: flex; flex-direction: column; background: #efebe7; box-shadow: 0 1px 12px 2px rgba(0, 0, 0, .75); }
    .title { height: 25px; background: #2f2f2f; color: #dcdcdc; display: flex; align-items: center; padding: 0 10px 0 20px; border-radius: 2px 2px 0 0; }
    .title b { flex: 1; text-align: center; font: 700 12.600px/25px "Open Sans", sans-serif; padding-top: 2px; }
    .body { flex: 1; display: flex; min-height: 0; }
    .side { width: 140px; background: #5c5c5c; color: #fff; }
    .page { height: 36px; display: flex; align-items: center; gap: 6px; padding: 0 6px 0 3px; line-height: 18px; }
    .page .slot { width: 28px; flex: none; display: flex; justify-content: center; }
    .page .txt { margin-top: -1px; }
    .page.on { background: #efebe7; color: #000; padding-left: 6px; }
    .grab { width: 9px; align-self: center; height: 17px; background: radial-gradient(circle at 1px 1px, #c2beb9 .8px, transparent 1px) 4px 0 / 9px 3px; }
    .main { flex: 1; display: flex; flex-direction: column; padding: 3px 3px 3px 0; }
    .search { height: 26px; border: 1px solid #2a719e; box-shadow: inset 0 0 0 1px #c5dcea; border-radius: 3px; background: #fff; display: flex; align-items: center; padding: 0 8px 0 7px; gap: 7px; }
    .search span { flex: 1; margin-top: -1px; }
    .cols { display: flex; margin-top: 6px; height: 401px; }
    .cols .grab { width: 4px; background-position: 1px 0; }
    .list { width: 460px; background: #fff; border: 1px solid #b5b1ad; padding: 2px 0 0; }
    .item { display: flex; align-items: flex-start; height: 21px; line-height: 20px; }
    .box { width: 14px; height: 14px; border: 1px solid #aaa; background: #fff; margin: 5px 9px 0 0; }
    .item > .ic { margin: 2px 4px 0 0; }
    .item b { font-weight: 400; margin-top: -1px; }
    .right { flex: 1; display: flex; flex-direction: column; justify-content: space-between; }
    .view { height: 369px; background: #fff; border: 1px solid #b5b1ad; color: #000; }
    .banner { height: 25px; background: #8eece6; color: #5c0000; font-weight: 700; font-size: 13px; line-height: 25px; padding-left: 4px; }
    .head { display: flex; justify-content: space-between; padding: 6px 4px 0 5px; }
    h1 { margin: 0; font-size: 27.200px; line-height: 32px; }
    h3 { margin: 18px 0 0 5px; font-size: 16px; line-height: 20px; }
    .facts { display: grid; grid-template-columns: 127px auto; column-gap: 15px; row-gap: 3px; margin-top: 25px; font-size: 13px; line-height: 20px; }
    .facts b { text-align: right; white-space: nowrap; margin-left: 5px; width: 122px; }
    .facts span, .facts a { letter-spacing: .1px; }
    .facts a { color: #1489cc; }
    .actions { display: flex; gap: 6px; height: 26px; }
    .btn { height: 26px; border: 1px solid #aaa6a2; border-radius: 3px; background: linear-gradient(#fff, #ebe9e6); display: flex; align-items: center; justify-content: center; width: 80px; white-space: nowrap; padding-bottom: 1px; }
    .up { width: 96px; border-color: #2a719e; background: linear-gradient(#fdfdfd, #dfe3e6); margin-right: auto; }
    .dis { color: #bdbab7; border-color: #c8c4c0; background: linear-gradient(#f7f5f2, #efece8); }
    .un { width: 124px; } .re { width: 192px; }
    .foot { display: flex; gap: 6px; justify-content: flex-end; margin-top: 6px; }
  `];
  render() {
    return html`
      <div class="title"><b>Complementos | Instalados (16)</b>
        <svg class="ic" width="15" height="15" viewBox="0 0 15 15"><circle cx="7.500" cy="7.500" r="7.200" fill="#55ad9b"></circle><path d="m5 5 5 5M10 5l-5 5" stroke="#1d4038" stroke-width="1.800"></path></svg>
      </div>
      <div class="body">
        <div class="side">${PAGES.map(([t, i, s]) => html`<div class=${classMap({ page: true, on: i === "installed" })}><span class="slot">${icon(i, s)}</span><span class="txt">${t}</span></div>`)}</div>
        <div class="grab"></div>
        <div class="main">
          <div class="search">${icon("search", 14)}<span>GPS</span>${icon("clear", 13)}</div>
          <div class="cols">
            <div class="list"><div class="item"><span class="box"><svg class="ic" width="12" height="12" viewBox="0 0 12 12"><path d="m2.500 6 2.500 3.500 4-8" fill="none" stroke="#111" stroke-width="1.900"></path></svg></span>${icon("gpsplus", 18)}<b>Ferramentas de GPS</b></div></div>
            <div class="grab"></div>
            <div class="right">
              <div class="view">
                <div class="banner">This is a core plugin, so you can't uninstall it</div>
                <div class="head"><h1>Ferramentas de GPS</h1>${icon("gpsplus", 23)}</div>
                <h3>Ferramentas para carregar e descarregar dados de GPS</h3>
                <div class="facts"><b>Categoria</b><span>Vetor</span><b>Installed version</b><a>Versão 0.1</a></div>
              </div>
              <div class="actions"><span class="btn up">Upgrade All</span><span class="btn dis un">Uninstall Plugin</span><span class="btn dis re">Reinstalar complemento</span></div>
            </div>
          </div>
          <div class="foot"><span class="btn">Close</span><span class="btn">Help</span></div>
        </div>
      </div>`;
  }
}

@customElement("app-root")
class AppRoot extends LitElement {
  static styles = [base, css`
    :host { display: flex; flex-direction: column; position: relative; width: 1920px; height: 1040px; overflow: hidden; background: #efebe7; color: #000; font: 15px/18px "DejaVu Sans", sans-serif; border-bottom: 1px solid #222; white-space: normal; }
    .title { height: 24px; background: #2f2f2f; color: #8f8d8a; display: flex; align-items: center; padding: 0 9px 0 88px; }
    .title b { flex: 1; text-align: center; font: 700 12.650px/24px "Open Sans", sans-serif; padding-top: 2px; }
    .menu { height: 23px; display: flex; gap: 15px; padding-left: 10px; line-height: 21px; border-bottom: 1px solid #cfcbc7; white-space: nowrap; }
    .menu u { text-underline-offset: 2px; text-decoration-thickness: 1px; text-decoration-skip-ink: none; }
    .work { flex: 1; display: flex; min-height: 0; }
    .docks { width: 363px; display: flex; flex-direction: column; }
    .split { width: 6px; display: flex; align-items: center; justify-content: center; }
    .split i { width: 3px; height: 17px; background: radial-gradient(circle at 1px 1px, #bbb7b2 .8px, transparent 1px) 0 0 / 6px 3px; }
    .canvas { flex: 1; background: #fff; border: 1px solid #b5b1ad; }
    .tools { display: flex; align-items: center; height: 31px; padding-left: 8px; gap: 10px; }
    .tools .dim { opacity: .4; display: flex; gap: 4px; align-items: center; margin-right: -2px; }
    .tree { height: 311px; border: 1px solid #b5b1ad; background: #fff; display: flex; }
    .rows { flex: 1; overflow: hidden; }
    .row { height: 20px; display: flex; align-items: center; padding-left: 5px; line-height: 19px; white-space: nowrap; }
    .row .exp { width: 18px; display: flex; }
    .row .ic { margin-right: 6px; position: relative; top: 1px; }
    .row .exp .ic { margin: 0; top: 0; }
    .row.child .exp { width: 40px; }
    .row.child .ic { margin-right: 6px; }
    .bar { width: 14px; border-left: 1px solid #b5b1ad; background: #e2e0dd; display: flex; flex-direction: column; justify-content: space-between; }
    .thumb { height: 85px; background: linear-gradient(90deg, #fff, #f1efec); border-bottom: 1px solid #b5b1ad; }
    .end { height: 14px; background: #f7f6f4; display: flex; align-items: center; justify-content: center; }
    .end.top { border-bottom: 1px solid #b5b1ad; }
    .end.bot { border-top: 1px solid #b5b1ad; }
    .dots { height: 6px; width: 17px; align-self: center; background: radial-gradient(circle at 1px 1px, #bbb7b2 .8px, transparent 1px) 0 2px / 3px 6px; }
    .layers { flex: 1; border: 1px solid #b5b1ad; background: #fff; }
    .status { height: 33px; display: flex; align-items: center; padding: 1px 7px 0 4px; }
    .status > span { margin-top: -1px; }
    .f { height: 26px; border: 1px solid #aaa6a2; border-radius: 3px; background: #fff; display: flex; align-items: center; padding-left: 5px; }
    .f .v { flex: 1; }
    .loc { width: 331px; padding-left: 8px; gap: 7px; color: #828282; margin-right: 8px; }
    .status > .msg { flex: 1; }
    .coord { width: 100px; justify-content: center; margin: 0 4px 0 5px; padding: 0; }
    .scale { width: 113px; margin: 0 12px 0 4px; padding-left: 4px; }
    .drop { width: 20px; height: 24px; border-left: 1px solid #c2beba; background: linear-gradient(#fff, #efedea); display: flex; align-items: center; justify-content: center; }
    .spin { width: 14px; height: 24px; border-left: 1px solid #c2beba; display: flex; flex-direction: column; align-items: center; justify-content: space-evenly; background: #fbfaf9; }
    .mag { width: 108px; margin: 0 10px 0 4px; }
    .rot { width: 104px; margin: 0 6px 0 10px; }
    .status > .chk { width: 14px; height: 14px; border: 1px solid #aaa; background: #fff; margin: 0 5px 0 0; }
    .status > .l-scale { margin-left: 12px; }
    .status > .l-mag { margin-left: 7px; }
    .status > .crs { margin: 0 5px 0 17px; }
    .status > .epsg { margin-right: 24px; }
    .dialog { position: absolute; left: 388px; top: 199px; width: 1260px; height: 496px; }
  `];
  render() {
    const check = html`<svg class="ic" width="12" height="12" viewBox="0 0 12 12"><path d="m2.500 6 2.500 3.500 4-8" fill="none" stroke="#111" stroke-width="1.900"></path></svg>`;
    return html`
      <div class="title"><b>Untitled Project - QGIS [mude]</b>
        <svg class="ic" width="80" height="15" viewBox="0 0 80 15"><path d="M9 8h6" stroke="#777" stroke-width="1.700"></path><path d="M38.500 11v-4.500l4.500 4.500zM44.500 5v4.500l-4.500-4.500z" fill="#777"></path><circle cx="72" cy="7.500" r="7" fill="#777"></circle><path d="m69.500 5 5 5M74.500 5l-5 5" stroke="#2f2f2f" stroke-width="1.800"></path></svg>
      </div>
      <div class="menu">${MENU.map(([t, k]) => html`<span>${k < 0 ? t : html`${t.slice(0, k)}<u>${t[k]}</u>${t.slice(k + 1)}`}</span>`)}</div>
      <qg-toolbar .items=${BAR1}></qg-toolbar>
      <qg-toolbar .items=${BAR2}></qg-toolbar>
      <div class="work">
        <div class="docks">
          <qg-dock-title label="Navegador"></qg-dock-title>
          <div class="tools">${["addlayer", "refresh", "filter", "collapse", "info"].map((n) => icon(n, 15))}</div>
          <div class="tree">
            <div class="rows">${TREE.map((r) => html`<div class=${classMap({ row: true, child: !!r.child })}><span class="exp">${r.a ? arrow(r.a) : nothing}</span>${icon(r.i, r.child ? 14 : 16)}<span>${r.t}</span></div>`)}</div>
            <div class="bar"><div><div class="end top">${arrow("up")}</div><div class="thumb"></div></div><div class="end bot">${arrow("down")}</div></div>
          </div>
          <div class="dots"></div>
          <qg-dock-title label="Camadas"></qg-dock-title>
          <div class="tools">${["brush", "group", "eye", "filter"].map((n) => icon(n, 15))}<span class="dim">${icon("epsilon", 15)}${arrow("down")}</span>${["expand", "collapse", "remove"].map((n) => icon(n, 15))}</div>
          <div class="layers"></div>
        </div>
        <div class="split"><i></i></div>
        <div class="canvas"></div>
      </div>
      <div class="status">
        <div class="f loc">${icon("search", 13)}<span>Type to locate (Ctrl+K)</span></div>
        <span class="msg">Pronto</span>
        <span>Coordenada</span><div class="f coord">132,-4</div>${icon("extents", 15)}
        <span class="l-scale">Escala</span><div class="f scale"><span class="v">1:1</span><span class="drop">${arrow("down")}</span></div>
        ${icon("lock", 14)}<span class="l-mag">Lupa</span><div class="f mag"><span class="v">100%</span><span class="spin">${arrow("up")}${arrow("down")}</span></div>
        <span>Rotação</span><div class="f rot"><span class="v">0.0 °</span><span class="spin">${arrow("up")}${arrow("down")}</span></div>
        <span class="chk">${check}</span><span>Renderizar</span>
        <span class="crs">${icon("crs", 15)}</span><span class="epsg">EPSG:4326</span>${icon("bubble", 16)}
      </div>
      <qg-plugin-dialog class="dialog"></qg-plugin-dialog>`;
  }
}
